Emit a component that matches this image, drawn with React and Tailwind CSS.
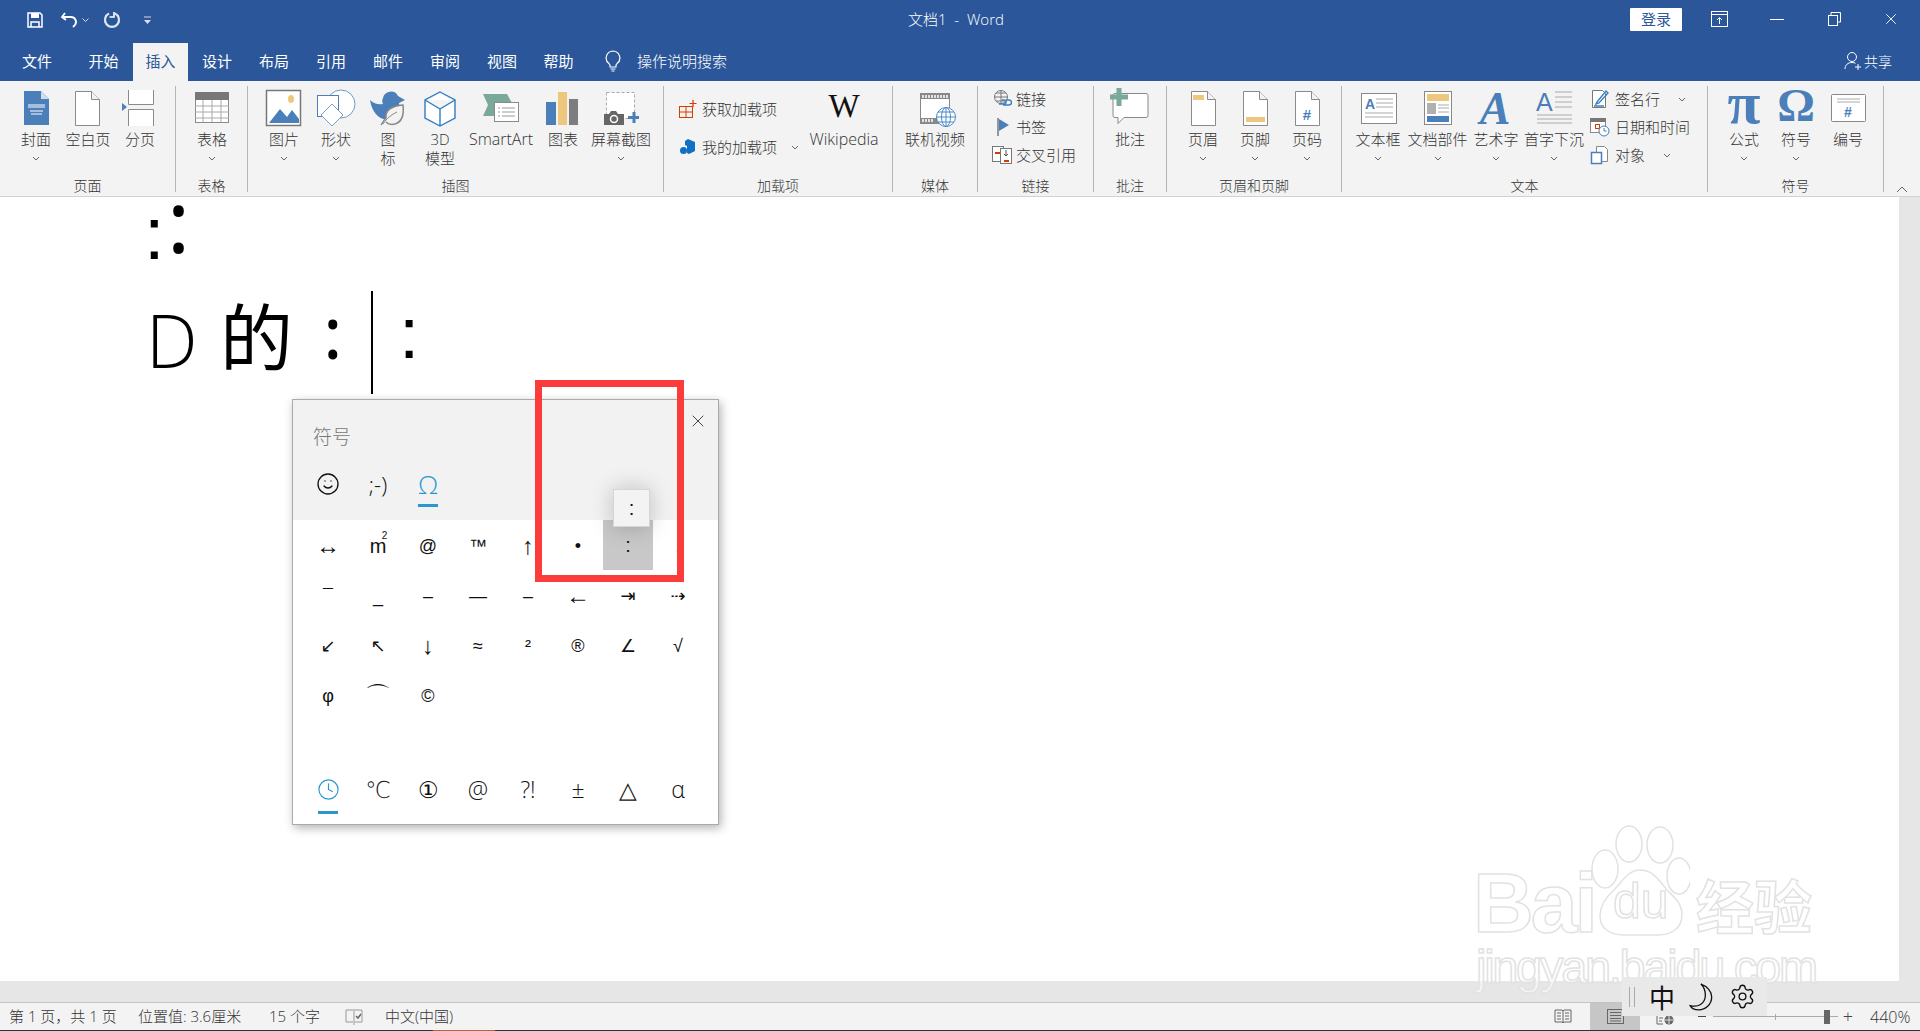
import React from 'react';
import { X, Smile, Clock, Settings } from 'lucide-react';

const BLUE = '#4a7fb9';
const TAN = '#eec77f';

const Ico = ({ children }) => (
  <svg width="40" height="38" viewBox="0 0 40 38" fill="none" className="overflow-visible">{children}</svg>
);

const Sm = ({ children }) => (
  <svg width="20" height="20" viewBox="0 0 20 20" fill="none" className="shrink-0">{children}</svg>
);

const Page = ({ x = 8 }) => (
  <>
    <path d={`M${x + 0.5} 3.5h16l8 8v26h-24z`} fill="#fff" stroke="#8a8a8a" />
    <path d={`M${x + 16.5} 3.5v8h8`} fill="#f3f3f3" stroke="#8a8a8a" />
  </>
);

const Chev = () => (
  <svg width="8" height="5" viewBox="0 0 8 5" fill="none" className="shrink-0">
    <path d="M1 1l3 3 3-3" stroke="#666" strokeWidth="1" />
  </svg>
);

const icons = {
  cover: (
    <Ico>
      <path d="M8 3h17l8 8v26H8z" fill={BLUE} />
      <path d="M25 3v8h8z" fill="#cfdded" />
      <path d="M12 17h17M12 19h17M14 23h13M15 26h11" stroke="#fff" />
    </Ico>
  ),
  blank: <Ico><Page x={7} /></Ico>,
  pageBreak: (
    <Ico>
      <path d="M8.5 2v14.500h25V2M8.500 38V21.500h25V38" fill="#fff" stroke="#8a8a8a" />
      <path d="M2 15l5 4-5 4z" fill={BLUE} />
    </Ico>
  ),
  table: (
    <Ico>
      <rect x="3.500" y="4.500" width="33" height="30" fill="#fff" stroke="#8a8a8a" />
      <rect x="3" y="4" width="34" height="8" fill="#777" />
      <path d="M3 18h34M3 24h34M3 30h34M11 12v22M20 12v22M29 12v22" stroke="#aaa" />
    </Ico>
  ),
  picture: (
    <Ico>
      <rect x="2.500" y="2.500" width="34" height="35" fill="#fff" stroke="#777" strokeWidth="1.500" />
      <path d="M5 35l11-14 7 8 5-7 7 9v4z" fill={BLUE} />
      <ellipse cx="27" cy="11" rx="3" ry="4" fill={TAN} />
    </Ico>
  ),
  shapes: (
    <Ico>
      <circle cx="25" cy="16" r="14" fill="#fff" stroke="#6f9bc9" />
      <rect x="1.500" y="7.500" width="21" height="21" fill="#fff" stroke={BLUE} />
      <path d="M16 16l11 11-11 11L5 27z" fill="#fff" stroke="#7f9fc0" />
    </Ico>
  ),
  iconLeaf: (
    <Ico>
      <path d="M2 12c4 4 9 5 13 4-1-2-1-4 0-6a8 8 0 0115-2l7 4-6 3c1 6-2 14-10 16C12 33 4 25 2 12z" fill={BLUE} />
      <path d="M13 37c2-3 3-5 5-7-1-8 6-12 17-13 1 9-1 17-8 19-4 1-7 0-9-2" fill="#f3f3f3" stroke="#888" strokeWidth="1.500" />
      <path d="M15 36c4-6 8-9 14-12" stroke="#888" />
    </Ico>
  ),
  cube: (
    <Ico>
      <path d="M20 4l15 8v18l-15 8-15-8V12zM5 12l15 9 15-9M20 21v17" fill="#fff" stroke="#2f7cc4" strokeWidth="1.400" />
    </Ico>
  ),
  smartArt: (
    <Ico>
      <path d="M2 6h24l5 9H14v13H2l5-11z" fill="#7aa899" />
      <rect x="13.500" y="14.500" width="24" height="19" fill="#fff" stroke="#8a8a8a" />
      <path d="M17 20h2M21 20h13M17 24h2M21 24h13M17 28h2M21 28h13" stroke="#999" />
    </Ico>
  ),
  chart: (
    <Ico>
      <rect x="3" y="14" width="10" height="23" fill={BLUE} />
      <rect x="15" y="4" width="9" height="33" fill={TAN} />
      <rect x="26" y="11" width="9" height="26" fill="#7d7d7d" />
    </Ico>
  ),
  screenshot: (
    <Ico>
      <rect x="5.500" y="4.500" width="28" height="26" fill="#fff" stroke="#aaa" strokeDasharray="3 2" />
      <path d="M3 26h5l2-3h5l2 3h6v11H3z" fill="#666" />
      <circle cx="13" cy="31" r="3.500" fill="#666" stroke="#fff" strokeWidth="1.500" />
      <path d="M33 24v11M27 29.500h11" stroke={BLUE} strokeWidth="3" />
    </Ico>
  ),
  video: (
    <Ico>
      <rect x="5.500" y="5.500" width="29" height="30" fill="#fff" stroke="#888" />
      <path d="M5 6h30v5H5zM5 30h30v5H5z" fill="#888" />
      <path d="M8 7v3M11 7v3M14 7v3M17 7v3M20 7v3M23 7v3M26 7v3M29 7v3M32 7v3M8 31v3M11 31v3M14 31v3M17 31v3" stroke="#fff" strokeWidth="1.500" />
      <circle cx="31" cy="29" r="9.500" fill="#fff" stroke="#4a8ac9" />
      <path d="M21.500 29h19M31 19.500v19M23 24h16M23 34h16" stroke="#4a8ac9" />
      <ellipse cx="31" cy="29" rx="4.500" ry="9.500" stroke="#4a8ac9" />
    </Ico>
  ),
  comment: (
    <Ico>
      <path d="M5 5.500h31a2 2 0 012 2v20a2 2 0 01-2 2H14l-6 6v-6H5a2 2 0 01-2-2v-20a2 2 0 012-2z" fill="#fff" stroke="#888" />
      <path d="M9 0v18M0 9h18" stroke="#7aa899" strokeWidth="5" />
    </Ico>
  ),
  header: (
    <Ico>
      <Page x={8} />
      <rect x="10" y="7" width="11" height="5" fill={TAN} />
    </Ico>
  ),
  footer: (
    <Ico>
      <Page x={8} />
      <rect x="11" y="29" width="19" height="5" fill={TAN} />
    </Ico>
  ),
  pageNum: (
    <Ico>
      <Page x={8} />
      <text x="20" y="32" textAnchor="middle" fontSize="15" fill={BLUE} fontWeight="700" className="font-['Liberation_Sans',sans-serif]">#</text>
    </Ico>
  ),
  textBox: (
    <Ico>
      <rect x="3.500" y="5.500" width="35" height="30" fill="#fff" stroke="#888" />
      <text x="7" y="21" fontSize="14" fontWeight="700" fill={BLUE} className="font-['Liberation_Sans',sans-serif]">A</text>
      <path d="M18 11h17M18 15h17M18 19h17M7 25h28M7 29h28" stroke="#aaa" />
    </Ico>
  ),
  quickParts: (
    <Ico>
      <rect x="6.500" y="3.500" width="27" height="33" fill="#fff" stroke="#888" />
      <rect x="9" y="6" width="22" height="7" fill={TAN} />
      <rect x="9" y="15" width="9" height="11" fill="#b0b0b0" />
      <path d="M20 17h11M20 20h11M20 24h11" stroke="#aaa" />
      <rect x="9" y="28" width="22" height="6" fill={BLUE} />
    </Ico>
  ),
  wordArt: (
    <Ico>
      <text x="19" y="36" textAnchor="middle" fontSize="46" fontWeight="700" fontStyle="italic" fill={BLUE} className="font-['Liberation_Serif',serif]">A</text>
    </Ico>
  ),
  dropCap: (
    <Ico>
      <text x="2" y="23" fontSize="25" fill={BLUE} className="font-['Liberation_Sans',sans-serif]">A</text>
      <path d="M21 4h17M21 9h17M21 14h17M21 19h17M3 27h35M3 31h35M3 35h35" stroke="#aaa" />
    </Ico>
  ),
  pi: (
    <Ico>
      <text x="20" y="35" textAnchor="middle" fontSize="60" fontWeight="700" fill={BLUE} className="font-['Liberation_Serif',serif]">π</text>
    </Ico>
  ),
  omega: (
    <Ico>
      <text x="20" y="33" textAnchor="middle" fontSize="47" fontWeight="700" fill={BLUE} className="font-['Liberation_Serif',serif]">Ω</text>
    </Ico>
  ),
  numbering: (
    <Ico>
      <rect x="3.500" y="6.500" width="34" height="27" rx="1" fill="#fff" stroke="#888" />
      <path d="M9 11h23M9 14h23" stroke="#aaa" />
      <text x="20" y="29" textAnchor="middle" fontSize="14" fontWeight="700" fill={BLUE} className="font-['Liberation_Sans',sans-serif]">#</text>
    </Ico>
  ),
  wiki: (
    <Ico>
      <text x="20" y="29" textAnchor="middle" fontSize="33" fill="#111" className="font-['Liberation_Serif',serif]">W</text>
    </Ico>
  ),
};

const Big = ({ icon, lines = [], chevron = true, className = 'w-[52px]', labelClass = '' }) => (
  <div className={`flex flex-col items-center shrink-0 pt-[2px] ${className}`}>
    <div className="h-[38px] flex items-start justify-center">{icon}</div>
    <div className={`mt-[4px] flex flex-col items-center leading-[19px] whitespace-nowrap ${labelClass}`}>
      {lines.map((l) => (
        <span key={l}>{l}</span>
      ))}
    </div>
    {chevron && <div className="h-[19px] flex items-center"><Chev /></div>}
  </div>
);

const Group = ({ label, className, children }) => (
  <div className={`h-[106px] shrink-0 flex flex-col border-r border-[#b5b5b5] ${className}`}>
    <div className="h-[94px] flex">{children}</div>
    <div className="h-[12px] leading-[12px] text-center whitespace-nowrap text-[14px]">{label}</div>
  </div>
);

const tabs = [
  ['文件', 'w-[74px]'],
  ['开始', 'w-[59px]'],
  ['插入', 'w-[55px] bg-[#f3f3f3] text-[#2b579a]'],
  ['设计', 'w-[58px]'],
  ['布局', 'w-[56px]'],
  ['引用', 'w-[58px]'],
  ['邮件', 'w-[56px]'],
  ['审阅', 'w-[58px]'],
  ['视图', 'w-[56px]'],
  ['帮助', 'w-[57px]'],
];

const rows = [
  ['↔', 'm', '@', '™', '↑', '•', ':', '.'],
  ['¯', '_', '–', '—', '–', '←', '⇥', '⇢'],
  ['↙', '↖', '↓', '≈', '²', '®', '∠', '√'],
  ['φ', '⌒', '©', '', '', '', '', ''],
];

const bottomTabs = ['℃', '①', '@', '?!', '±', '△', 'α'];

const cellClass = (s) => {
  if (s === ':') return 'bg-[#c8c8c8] mt-[-1px] text-[20px]';
  if (s === '⌒') return 'text-[26px]';
  if ('↔↑←↓'.includes(s)) return 'text-[24px] font-light';
  return '';
};

function TitleBar() {
  return (
    <div className="h-[43px] flex items-center text-white relative">
      <div className="flex items-center pl-[27px] pb-[3px]">
        <svg width="16" height="16" viewBox="0 0 16 16" fill="none">
          <path d="M1 1h12l2 2v12H1z" stroke="#fff" strokeWidth="1.500" />
          <path d="M4 1v5h8V1" fill="#fff" />
          <path d="M4 15v-5h8v5" stroke="#fff" strokeWidth="1.500" />
        </svg>
        <svg width="20" height="18" viewBox="0 0 20 18" fill="none" className="ml-[17px]">
          <path d="M5 2L2 6l4 3" stroke="#fff" strokeWidth="1.800" />
          <path d="M2.500 6H11a5 5 0 014 8l-2 2" stroke="#fff" strokeWidth="1.800" />
        </svg>
        <div className="ml-[2px] mr-[14px]"><svg width="7" height="4" viewBox="0 0 7 4" fill="none"><path d="M.5.5l3 3 3-3" stroke="#dde" /></svg></div>
        <svg width="18" height="18" viewBox="0 0 18 18" fill="none">
          <path d="M6 2.600A7 7 0 1012 2.600" stroke="#dfe6f0" strokeWidth="2.200" />
          <path d="M11 1v5H6.500" stroke="#fff" strokeWidth="1.600" />
        </svg>
        <svg width="7" height="8" viewBox="0 0 7 8" fill="none" className="ml-[23px]">
          <path d="M0 1h7" stroke="#dde" />
          <path d="M0 4h7L3.500 8z" fill="#dde" />
        </svg>
      </div>
      <div className="absolute left-[908px] top-[8px] text-[15px] leading-[22px] font-light whitespace-nowrap">文档1&nbsp; -&nbsp; Word</div>
      <div className="ml-auto flex items-center pb-[5px]">
        <div className="w-[52px] h-[23px] bg-white rounded-[1px] text-[#2b579a] text-[15px] leading-[23px] text-center">登录</div>
        <svg width="17" height="16" viewBox="0 0 17 16" fill="none" className="ml-[29px]">
          <rect x=".5" y=".5" width="16" height="15" stroke="#fff" />
          <path d="M0 3.500h17" stroke="#fff" />
          <path d="M8.500 13V7M6 9l2.500-2.500L11 9" stroke="#fff" />
        </svg>
        <div className="ml-[42px] w-[14px] h-px bg-white" />
        <svg width="13" height="14" viewBox="0 0 13 14" fill="none" className="ml-[44px]">
          <rect x=".5" y="3.500" width="9" height="10" stroke="#fff" />
          <path d="M3 3V.5h9.500V10H10" stroke="#fff" />
        </svg>
        <X size={18} strokeWidth={1.200} className="ml-[41px] mr-[20px] text-white" />
      </div>
    </div>
  );
}

function TabRow() {
  return (
    <div className="h-[38px] flex items-stretch text-white text-[15px]">
      {tabs.map(([t, cls]) => (
        <div key={t} className={`flex items-center justify-center shrink-0 pb-[2px] ${cls}`}>{t}</div>
      ))}
      <div className="flex items-center ml-[18px] pb-[2px]">
        <svg width="16" height="22" viewBox="0 0 16 22" fill="none">
          <path d="M8 1a7 7 0 00-4 12.600c.6.5 1 1.200 1 2V17h6v-1.400c0-.8.4-1.500 1-2A7 7 0 008 1z" stroke="#fff" strokeWidth="1.200" />
          <path d="M5.500 19h5M6.500 21h3" stroke="#fff" strokeWidth="1.200" />
        </svg>
        <span className="ml-[16px] font-light">操作说明搜索</span>
      </div>
      <div className="ml-auto flex items-center pr-[28px] pb-[2px]">
        <svg width="18" height="20" viewBox="0 0 18 20" fill="none">
          <circle cx="8" cy="6" r="4.500" stroke="#fff" />
          <path d="M1 18c0-4 3-6.500 7-6.500 1.500 0 2.500.3 3.500.8M11 16h6M14 13v6" stroke="#fff" />
        </svg>
        <span className="ml-[2px] text-[14px] font-light">共享</span>
      </div>
    </div>
  );
}

function Ribbon() {
  return (
    <div className="h-[116px] bg-[#f3f3f3] border-b border-[#d2d2d2] pt-[5px] flex text-[15px] text-[#333] font-light">
      <Group label="页面" className="w-[176px]">
        <div className="flex pl-[10px]">
          <Big icon={icons.cover} lines={['封面']} />
          <Big icon={icons.blank} lines={['空白页']} chevron={false} />
          <Big icon={icons.pageBreak} lines={['分页']} chevron={false} />
        </div>
      </Group>
      <Group label="表格" className="w-[72px]">
        <div className="flex pl-[10px]">
          <Big icon={icons.table} lines={['表格']} />
        </div>
      </Group>
      <Group label="插图" className="w-[416px]">
        <div className="flex pl-[10px]">
          <Big icon={icons.picture} lines={['图片']} />
          <Big icon={icons.shapes} lines={['形状']} />
          <Big icon={icons.iconLeaf} lines={['图', '标']} chevron={false} />
          <Big icon={icons.cube} lines={['3D', '模型']} chevron={false} />
          <Big icon={icons.smartArt} lines={['SmartArt']} chevron={false} className="w-[70px]" labelClass="text-[16px]" />
          <Big icon={icons.chart} lines={['图表']} chevron={false} className="w-[54px]" />
          <Big icon={icons.screenshot} lines={['屏幕截图']} className="w-[62px]" />
        </div>
      </Group>
      <Group label="加载项" className="w-[229px]">
        <div className="flex">
          <div className="w-[145px] pt-[4px] pl-[15px]">
            <div className="h-[38px] flex items-center whitespace-nowrap">
              <Sm>
                <rect x=".5" y="7.500" width="13" height="11" stroke="#d83b01" />
                <path d="M7 8v10M1 13h12" stroke="#d83b01" />
                <path d="M14 1v7M10.500 4.500h7" stroke="#d83b01" strokeWidth="1.200" />
              </Sm>
              <span className="ml-[3px]">获取加载项</span>
            </div>
            <div className="h-[38px] flex items-center whitespace-nowrap">
              <Sm>
                <path d="M9 2l7 3v9l-6 3-2-1V9L6 8V4z" fill="#1170c2" />
                <circle cx="4.500" cy="13.500" r="3.500" fill="#1170c2" />
              </Sm>
              <span className="ml-[3px]">我的加载项</span>
              <span className="ml-[14px]"><Chev /></span>
            </div>
          </div>
          <Big icon={icons.wiki} lines={['Wikipedia']} chevron={false} className="w-[70px]" labelClass="text-[16px]" />
        </div>
      </Group>
      <Group label="媒体" className="w-[85px]">
        <div className="flex pl-[6px]">
          <Big icon={icons.video} lines={['联机视频']} chevron={false} className="w-[72px]" />
        </div>
      </Group>
      <Group label="链接" className="w-[116px]">
        <div className="pl-[14px] mt-[-1px]">
          <div className="h-[28px] flex items-center gap-[4px]">
            <Sm>
              <circle cx="9" cy="8" r="6.500" stroke="#777" />
              <path d="M2.500 8h13M9 1.500v13M4 4h10M4 12h10" stroke="#777" />
              <path d="M7 15h5a2 2 0 000-4h-2M14 11h3a2 2 0 010 5h-6" stroke="#3f7fc0" strokeWidth="1.500" />
            </Sm>
            <span>链接</span>
          </div>
          <div className="h-[28px] flex items-center gap-[4px]">
            <Sm>
              <path d="M6 1v18" stroke="#777" strokeWidth="1.500" />
              <path d="M7 2l10 6-10 6z" fill={BLUE} />
            </Sm>
            <span>书签</span>
          </div>
          <div className="h-[28px] flex items-center gap-[4px] whitespace-nowrap">
            <Sm>
              <rect x=".5" y="1.500" width="11" height="15" fill="#fff" stroke="#777" />
              <rect x="8.500" y="3.500" width="11" height="15" fill="#fff" stroke="#777" />
              <path d="M3 8h5M12 16h5" stroke="#d83b01" strokeWidth="2" />
              <path d="M14 5v6M12 9l2 2 2-2" stroke="#555" />
            </Sm>
            <span>交叉引用</span>
          </div>
        </div>
      </Group>
      <Group label="批注" className="w-[73px]">
        <div className="flex">
          <Big icon={icons.comment} lines={['批注']} chevron={false} className="w-[72px]" />
        </div>
      </Group>
      <Group label="页眉和页脚" className="w-[175px]">
        <div className="flex pl-[10px]">
          <Big icon={icons.header} lines={['页眉']} />
          <Big icon={icons.footer} lines={['页脚']} />
          <Big icon={icons.pageNum} lines={['页码']} />
        </div>
      </Group>
      <Group label="文本" className="w-[366px]">
        <div className="flex pl-[10px]">
          <Big icon={icons.textBox} lines={['文本框']} />
          <Big icon={icons.quickParts} lines={['文档部件']} className="w-[67px]" />
          <Big icon={icons.wordArt} lines={['艺术字']} className="w-[50px]" />
          <Big icon={icons.dropCap} lines={['首字下沉']} className="w-[66px]" />
          <div className="pl-[3px] mt-[-1px]">
            <div className="h-[28px] flex items-center gap-[5px] whitespace-nowrap">
              <Sm>
                <path d="M2.500 1.500h10l3 3v14h-13z" fill="#fff" stroke="#777" />
                <path d="M7 13l9-11 2 2-9 10-3 1zM4 17h10" stroke="#3f7fc0" strokeWidth="1.400" />
              </Sm>
              <span>签名行</span>
              <span className="ml-[13px]"><Chev /></span>
            </div>
            <div className="h-[28px] flex items-center gap-[5px] whitespace-nowrap">
              <Sm>
                <rect x=".5" y="1.500" width="15" height="14" fill="#fff" stroke="#888" />
                <rect x="0" y="1" width="16" height="4" fill="#777" />
                <rect x="5.500" y="7.500" width="4" height="4" stroke="#d83b01" />
                <circle cx="14" cy="14" r="5" fill="#fff" stroke="#3f7fc0" />
                <path d="M14 11v3h2.500" stroke="#3f7fc0" />
              </Sm>
              <span>日期和时间</span>
            </div>
            <div className="h-[28px] flex items-center gap-[5px] whitespace-nowrap">
              <Sm>
                <path d="M6.500 1.500h8l3 3v12h-11z" fill="#fff" stroke="#888" />
                <rect x="1.500" y="7.500" width="10" height="11" fill="#fff" stroke={BLUE} strokeWidth="1.500" />
              </Sm>
              <span>对象</span>
              <span className="ml-[13px]"><Chev /></span>
            </div>
          </div>
        </div>
      </Group>
      <Group label="符号" className="w-[176px]">
        <div className="flex pl-[10px]">
          <Big icon={icons.pi} lines={['公式']} />
          <Big icon={icons.omega} lines={['符号']} />
          <Big icon={icons.numbering} lines={['编号']} chevron={false} />
        </div>
      </Group>
      <div className="flex-1 flex items-end justify-center pb-[3px]">
        <svg width="12" height="7" viewBox="0 0 12 7" fill="none">
          <path d="M1 6l5-5 5 5" stroke="#666" />
        </svg>
      </div>
    </div>
  );
}

function SymbolPanel() {
  return (
    <div className="absolute left-[292px] top-[399px] w-[427px] h-[426px] bg-white border border-[#aaa] shadow-[2px_3px_9px_rgba(0,0,0,0.3)] text-[#111] font-['Noto_Sans_CJK_SC',sans-serif]">
      <div className="h-[120px] bg-[#f2f2f2] relative pl-[10px]">
        <div className="pl-[10px] pt-[24px] text-[19px] leading-[24px] text-[#777] font-light">符号</div>
        <X size={20} strokeWidth={1} className="absolute right-[10px] top-[11px] text-[#222]" />
        <div className="flex mt-[14px]">
          <div className="w-[50px] h-[44px] flex items-center justify-center">
            <Smile size={24} strokeWidth={1.300} />
          </div>
          <div className="w-[50px] h-[44px] flex items-center justify-center text-[22px] font-['Open_Sans',sans-serif] font-light">;-)</div>
          <div className="w-[50px] h-[44px] flex flex-col items-center justify-center text-[#2a96d2] relative">
            <span className="text-[26px] leading-[26px] font-['Open_Sans',sans-serif] font-light">Ω</span>
            <span className="absolute bottom-[-1px] w-[20px] h-[3px] bg-[#2a96d2]" />
          </div>
        </div>
      </div>
      <div className="pl-[10px] pt-[1px] text-[18px] font-['Liberation_Sans','DejaVu_Sans',sans-serif]">
        {rows.map((r, i) => (
          <div key={i} className="flex h-[50px]">
            {r.map((s, j) => (
              <div key={j} className={`w-[50px] h-[50px] flex items-center justify-center ${cellClass(s)}`}>
                {s === 'm' ? (
                  <span className="text-[20px] relative">m<span className="absolute right-[-1px] top-[-3px] text-[10px]">2</span></span>
                ) : s}
              </div>
            ))}
          </div>
        ))}
      </div>
      <div className="absolute left-[10px] top-[367px] flex">
        <div className="w-[50px] h-[48px] flex flex-col items-center justify-start pt-[11px] relative text-[#2a96d2]">
          <Clock size={23} strokeWidth={1.200} />
          <span className="absolute bottom-[1px] w-[20px] h-[3px] bg-[#2a96d2]" />
        </div>
        {bottomTabs.map((s) => (
          <div key={s} className="w-[50px] h-[48px] flex items-start justify-center pt-[7px] text-[23px] leading-[30px] font-light font-['Open_Sans','DejaVu_Sans',sans-serif]">{s}</div>
        ))}
      </div>
      <div className="absolute left-[320px] top-[89px] w-[37px] h-[38px] bg-[#f3f3f3] border border-[#d6d6d6] shadow-[0_0_22px_rgba(0,0,0,0.22)] flex items-center justify-center text-[20px] font-['Liberation_Sans',sans-serif]">:</div>
    </div>
  );
}

function Watermark() {
  const stroke = '[-webkit-text-stroke:1.500px_#e2e2e2] text-white/60';
  return (
    <div className="absolute left-[1470px] top-[825px] w-[350px] h-[172px] pointer-events-none">
      <span className={`absolute left-[3px] top-[33px] text-[84px] leading-[90px] font-bold tracking-[-3px] font-['Liberation_Sans',sans-serif] ${stroke}`}>Bai</span>
      <svg width="100" height="115" viewBox="0 0 100 115" fill="none" className="absolute left-[120px] top-0">
        <g stroke="#e2e2e2" strokeWidth="1.500" fill="#fff">
          <ellipse cx="39" cy="19" rx="13" ry="18" />
          <ellipse cx="70" cy="20" rx="13" ry="18" />
          <ellipse cx="15" cy="44" rx="13" ry="19" />
          <ellipse cx="89" cy="51" rx="12" ry="18" />
          <path d="M50 45c-12 0-18 12-26 20-8 7-14 15-14 26 0 14 12 19 24 19h34c12 0 24-6 24-20 0-12-8-18-15-25-7-8-13-20-27-20z" />
        </g>
      </svg>
      <span className={`absolute left-[143px] top-[46px] text-[50px] leading-[60px] font-['Liberation_Sans',sans-serif] ${stroke}`}>du</span>
      <span className={`absolute left-[226px] top-[44px] text-[58px] leading-[70px] font-bold font-['Noto_Sans_CJK_SC',sans-serif] ${stroke}`}>经验</span>
      <span className={`absolute left-[6px] top-[112px] text-[47px] leading-[60px] tracking-[-2.300px] whitespace-nowrap font-['Liberation_Sans',sans-serif] ${stroke}`}>jingyan.baidu.com</span>
    </div>
  );
}

function StatusBar() {
  return (
    <div className="h-[28px] bg-[#f3f3f3] border-t border-[#c4c4c4] flex items-stretch text-[15px] text-[#333] font-light whitespace-nowrap">
      <div className="flex items-center pl-[9px]">
        <span className="w-[129px]">第 1 页，共 1 页</span>
        <span className="w-[131px]">位置值: 3.6厘米</span>
        <span className="w-[76px]">15 个字</span>
        <svg width="18" height="16" viewBox="0 0 18 16" fill="none" className="mr-[22px]">
          <path d="M8 1H1v12h7M10 1h7v12h-7M9 0v16" stroke="#999" />
          <path d="M11 7l2 2 3-4" stroke="#666" strokeWidth="1.500" />
        </svg>
        <span>中文(中国)</span>
      </div>
      <div className="ml-auto flex items-stretch">
        <div className="w-[52px] pl-[16px] flex items-center">
          <svg width="18" height="15" viewBox="0 0 18 15" fill="none">
            <path d="M1 1h7l1 1 1-1h7v12h-7l-1 1-1-1H1zM9 2v11M3 4h4M3 7h4M3 10h4M11 4h4M11 7h4M11 10h4" stroke="#666" />
          </svg>
        </div>
        <div className="w-[50px] bg-[#c6c6c6] flex items-center justify-center">
          <svg width="17" height="15" viewBox="0 0 17 15" fill="none">
            <rect x=".5" y=".5" width="16" height="14" stroke="#666" />
            <path d="M3 3.500h11M3 6.500h11M3 9.500h11M3 12h11" stroke="#666" />
          </svg>
        </div>
        <div className="w-[50px] flex items-center justify-center">
          <svg width="18" height="12" viewBox="0 0 18 12" fill="none" className="mt-[6px]">
            <path d="M1 1v9h6M3 4h4M3 7h3" stroke="#666" />
            <circle cx="13" cy="6" r="4.500" fill="#666" />
            <path d="M9 6h8M13 2v8" stroke="#fff" strokeWidth=".8" />
          </svg>
        </div>
        <div className="w-[23px] flex items-center justify-center"><span className="w-[8px] h-px bg-[#444]" /></div>
        <div className="w-[125px] flex items-center relative">
          <span className="w-full h-px bg-[#aaa]" />
          <span className="absolute left-[62px] w-px h-[6px] bg-[#aaa]" />
          <span className="absolute left-[111px] w-[6px] h-[14px] bg-[#666]" />
        </div>
        <div className="w-[20px] flex items-center justify-center text-[18px] text-[#444]">+</div>
        <div className="w-[62px] pl-[12px] flex items-center text-[16px] font-['Open_Sans',sans-serif]">440%</div>
      </div>
    </div>
  );
}

export default function App() {
  return (
    <div className="h-[1031px] flex flex-col overflow-hidden relative bg-white font-['Open_Sans','Noto_Sans_CJK_SC',sans-serif]">
      <div className="bg-[#2b579a]">
        <TitleBar />
        <TabRow />
      </div>
      <Ribbon />

      {/* document area */}
      <div className="flex-1 flex min-h-0">
        <div className="flex-1 pl-[146px] text-black">
          <div className="h-[85px] flex">
            <span className="w-[23px] mt-[-13px] ml-[-2px] text-[74px] leading-[100px] font-['Liberation_Sans',sans-serif]">:</span>
            <span className="mt-[-27px] text-[86px] leading-[100px] font-['Noto_Sans',sans-serif]">:</span>
          </div>
          <div className="flex items-start h-[110px] text-[73px] leading-[100px]">
            <span className="w-[74px] mt-[8px] font-light font-['Open_Sans',sans-serif]">D</span>
            <span className="w-[103px] mt-[1px] font-['Noto_Sans_CJK_SC',sans-serif]">的</span>
            <span className="w-[48px] mt-[-1px] font-['Noto_Sans',sans-serif]">:</span>
            <span className="w-[2px] h-[103px] mt-[9px] bg-black shrink-0" />
            <span className="ml-[26px] mt-[1px] font-['Liberation_Sans',sans-serif]">:</span>
          </div>
        </div>
        <div className="w-[21px] bg-[#e6e6e6]" />
      </div>
      <div className="h-[21px] bg-[#e6e6e6]" />
      <StatusBar />
      <div className="h-px flex bg-[#1b3a4b] shrink-0">
        <div className="ml-[433px] w-[62px] bg-[#b5652f]" />
      </div>

      <SymbolPanel />
      <div className="absolute left-[535px] top-[380px] w-[149px] h-[202px] border-[7px] border-[#fc3b3b]" />
      <Watermark />
      <div className="absolute left-[1622px] top-[977px] w-[145px] h-[39px] bg-[#e9e9e9] flex items-center text-[#111]">
        <span className="ml-[7px] w-[6px] h-[20px] border-x border-[#aaa]" />
        <span className="ml-[14px] text-[26px] leading-[30px] font-['Noto_Sans_CJK_SC',sans-serif]">中</span>
        <svg width="26" height="28" viewBox="0 0 24 26" fill="none" className="ml-[14px]">
          <path d="M11 1c6 2 10 7 10 12 0 7-6 12-12 12-4 0-7-2-8-4 8 2 13-2 14-8 .5-5-1-9-4-12z" stroke="#111" strokeWidth="1.200" />
        </svg>
        <Settings size={27} strokeWidth={1.200} className="ml-[14px]" />
      </div>
    </div>
  );
}
